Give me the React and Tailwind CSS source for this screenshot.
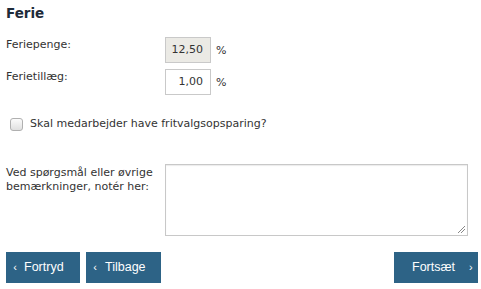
export default function App() {
  const verdana = { fontFamily: '"DejaVu Sans", Verdana, sans-serif' };
  return (
    <div className="w-[481px] h-[289px] bg-white text-[#333] px-[6px] overflow-hidden" style={verdana}>
      <h1 className="text-[13.5px] leading-[16px] font-bold text-[#1e2b3a] pt-[5px]">Ferie</h1>

      <div className="flex items-start mt-[16px]">
        <div className="w-[159px] text-[11px] leading-[14px] pt-[1px]">Feriepenge:</div>
        <div className="w-[46px] h-[26px] bg-[#ebeae5] border border-[#c9c9c9] text-[11px] flex items-center justify-end pr-[7px]">12,50</div>
        <span className="text-[11px] ml-[5px] mt-[6px]">%</span>
      </div>

      <div className="flex items-start mt-[6px]">
        <div className="w-[159px] text-[11px] leading-[14px] pt-[1px]">Ferietillæg:</div>
        <div className="w-[46px] h-[26px] bg-white border border-[#c9c9c9] text-[11px] flex items-center justify-end pr-[7px]">1,00</div>
        <span className="text-[11px] ml-[5px] mt-[6px]">%</span>
      </div>

      <div className="flex items-center mt-[22px] pl-[4px]">
        <span className="w-[13px] h-[13px] rounded-[3px] border border-[#b0b0b0] bg-gradient-to-b from-[#fbfbfb] to-[#e0e0e0]"></span>
        <span className="text-[11px] leading-[14px] ml-[7px]">Skal medarbejder have fritvalgsopsparing?</span>
      </div>

      <div className="flex items-start mt-[33px]">
        <div className="w-[159px] text-[11px] leading-[14px] pt-[2px] pr-[4px]">Ved spørgsmål eller øvrige bemærkninger, notér her:</div>
        <div className="relative w-[303px] h-[72px] bg-white border border-[#c8c8c8] shadow-[inset_0_1px_1px_rgba(0,0,0,0.08)]">
          <svg className="absolute right-[1px] bottom-[1px]" width="10" height="10" viewBox="0 0 10 10">
            <line x1="9" y1="2" x2="2" y2="9" stroke="#888" strokeWidth="1" />
            <line x1="9" y1="5" x2="5" y2="9" stroke="#888" strokeWidth="1" />
          </svg>
        </div>
      </div>

      <div className="flex items-center mt-[16px] -mr-[3px]" style={{ fontFamily: '"Liberation Sans", Arial, sans-serif' }}>
        <button className="w-[74px] h-[31px] bg-[#2d6386] text-white text-[12.5px] flex items-center pl-[6px]">
          <span className="text-[11px] w-[6px]">‹</span>
          <span className="ml-[6px]">Fortryd</span>
        </button>
        <button className="w-[75px] h-[31px] bg-[#2d6386] text-white text-[12.5px] flex items-center pl-[6px] ml-[6px]">
          <span className="text-[11px] w-[6px]">‹</span>
          <span className="ml-[7px]">Tilbage</span>
        </button>
        <button className="w-[84px] h-[31px] bg-[#2d6386] text-white text-[12.5px] flex items-center pl-[18px] ml-auto">
          <span>Fortsæt</span>
          <span className="text-[11px] ml-[14px]">›</span>
        </button>
      </div>
    </div>
  );
}
